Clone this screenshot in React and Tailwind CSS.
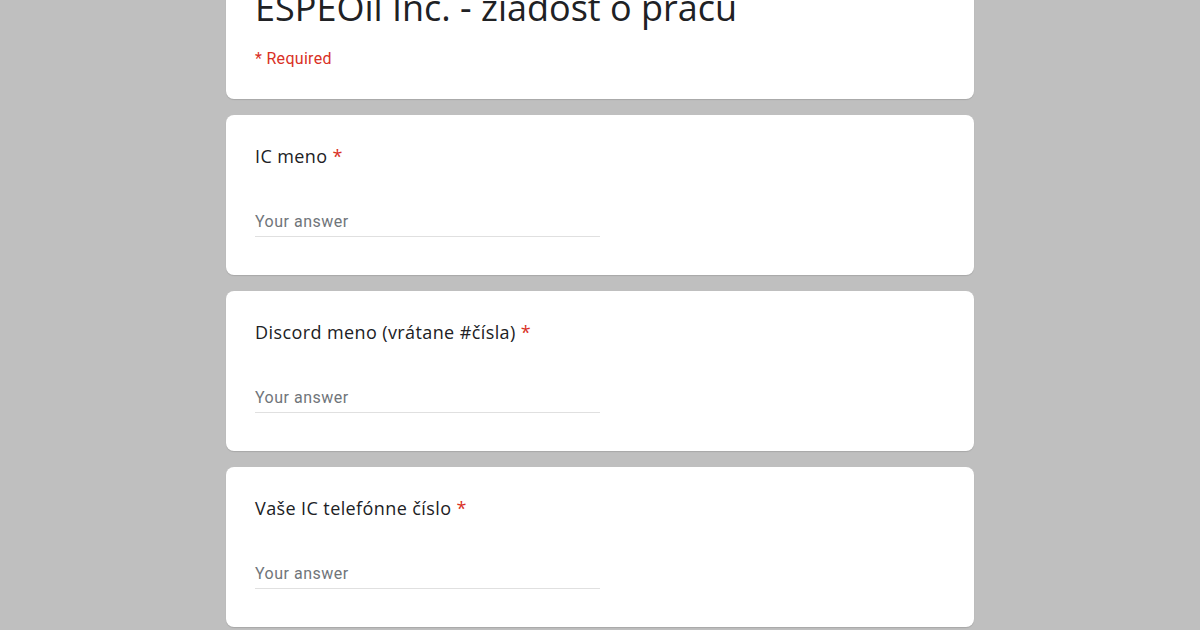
import React from 'react';

const questions = [
  { label: 'IC meno' },
  { label: 'Discord meno (vrátane #čísla)' },
  { label: 'Vaše IC telefónne číslo' },
];

const Question = ({ label }) => (
  <div className="bg-white rounded-lg shadow-[0_1px_1px_rgba(0,0,0,0.12)] pt-[29px] px-[29px] pb-[38px]">
    <div className="text-[18px] leading-6 tracking-[0.4px] text-[#202124] font-['Open_Sans',sans-serif]">
      {label}
      <span className="text-[#d93025]"> *</span>
    </div>
    <div className="mt-[41px] w-[345px] border-b border-[#e0e0e0] pb-[2px]">
      <span className="text-[16px] leading-6 tracking-[0.5px] text-[#70757a] font-['Roboto',sans-serif]">
        Your answer
      </span>
    </div>
  </div>
);

export default function App() {
  return (
    <div className="w-[1200px] h-[630px] overflow-hidden bg-[#bfbfbf]">
      <div className="w-[748px] mx-auto -mt-[40px] flex flex-col gap-4">
        <div className="bg-white rounded-lg shadow-[0_1px_1px_rgba(0,0,0,0.12)] pt-[26px] px-[29px] pb-[28.5px]">
          <h1 className="text-[36px] leading-[44px] text-[#202124] font-['Open_Sans',sans-serif]">
            ESPEOil Inc. - žiadosť o prácu
          </h1>
          <div className="mt-[16.5px] text-[16px] leading-6 tracking-[0.3px] text-[#d93025] font-['Roboto',sans-serif]">
            * Required
          </div>
        </div>
        {questions.map((q) => (
          <Question key={q.label} label={q.label} />
        ))}
      </div>
    </div>
  );
}
